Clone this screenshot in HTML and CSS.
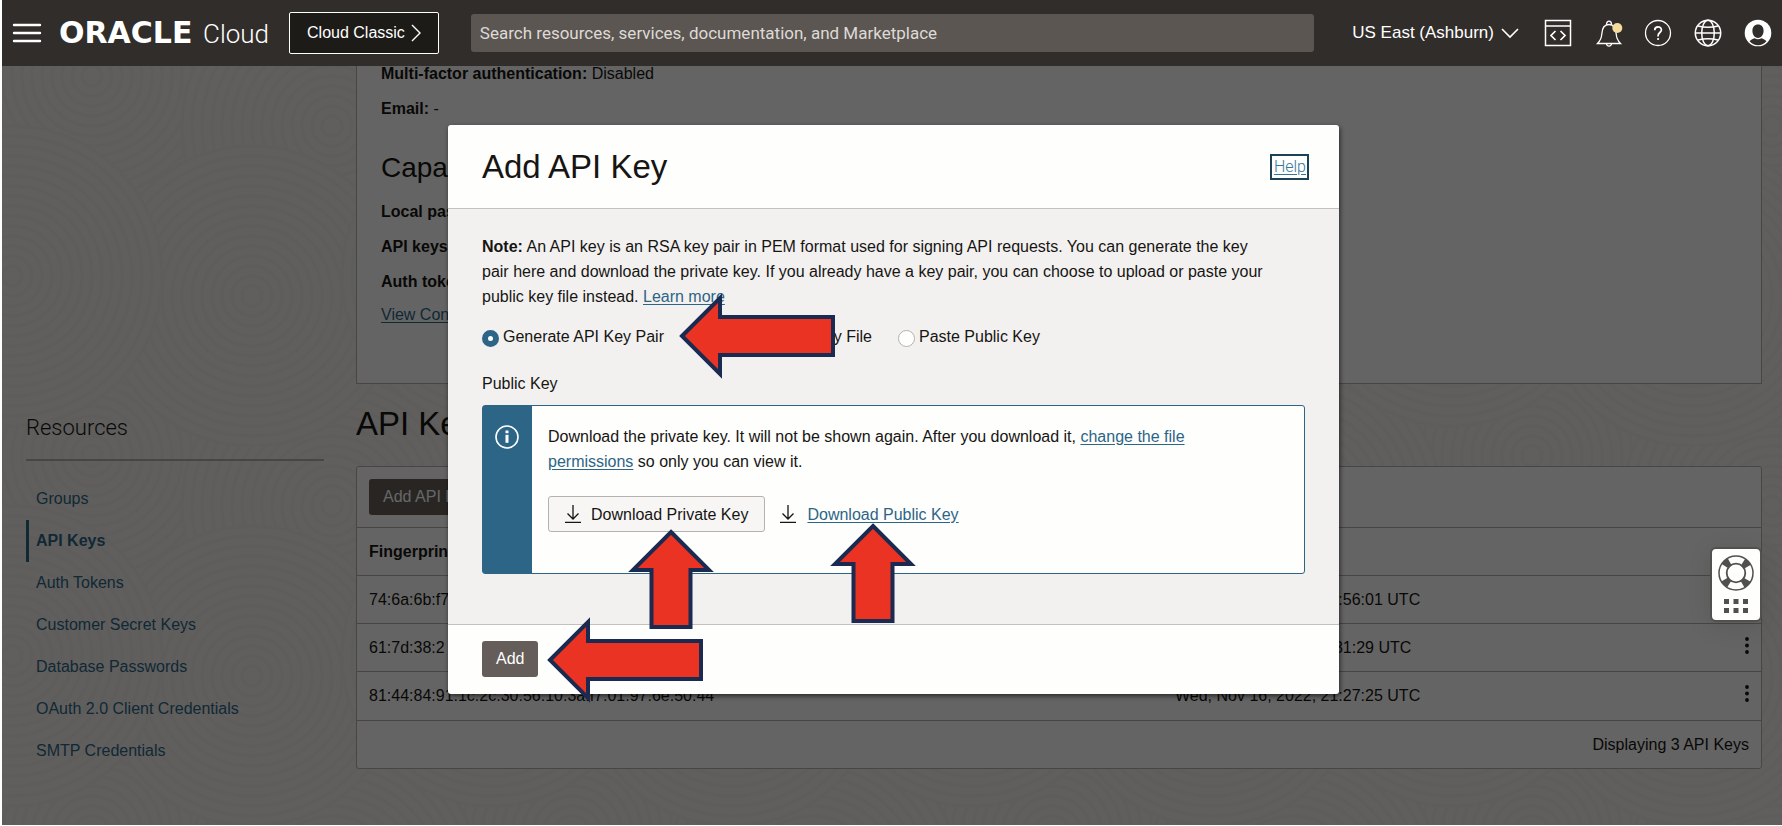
FILE: index.html
```html
<!DOCTYPE html>
<html lang="en">
<head>
<meta charset="utf-8">
<title>Add API Key - Oracle Cloud</title>
<link rel="stylesheet" href="styles.css">
</head>
<body>
<div class="app">
  <header class="topbar">
    <button class="icon-btn" type="button" aria-label="Menu">
      <svg width="28" height="20" viewBox="0 0 28 20" fill="none" stroke="#fff" stroke-width="2.4" stroke-linecap="round"><path d="M1 2h26M1 10h26M1 18h26"/></svg>
    </button>
    <a class="brand" href="#"><span class="brand-oracle">ORACLE</span><span class="brand-cloud">Cloud</span></a>
    <button class="classic" type="button">Cloud Classic
      <svg width="10" height="18" viewBox="0 0 10 18" fill="none" stroke="#fff" stroke-width="1.4"><path d="M1 1l8 8-8 8"/></svg>
    </button>
    <input class="search" type="search" aria-label="Search" placeholder="Search resources, services, documentation, and Marketplace">
    <button class="region" type="button">US East (Ashburn)
      <svg width="18" height="10" viewBox="0 0 18 10" fill="none" stroke="#fff" stroke-width="1.6"><path d="M1 1l8 8 8-8"/></svg>
    </button>
    <nav class="tools" aria-label="Tools">
      <button class="icon-btn" type="button" aria-label="Developer tools">
        <svg width="28" height="28" viewBox="0 0 28 28" fill="none" stroke="#fff" stroke-width="1.5"><path d="M1.500 1.500h25v25h-25zM1.500 7h25"/><path d="M11.500 12l-4.500 4.500 4.500 4.500M16.500 12l4.500 4.500-4.500 4.500" stroke-width="1.700"/></svg>
      </button>
      <button class="icon-btn" type="button" aria-label="Notifications">
        <svg width="28" height="28" viewBox="0 0 28 28" fill="none" stroke="#fff" stroke-width="1.300"><path d="M3.500 24.500c3-3 4-5 4.300-9.500.3-6 2.200-9.500 7.200-9.500s6.900 3.500 7.200 9.500c.3 4.500 1.300 6.500 4.300 9.500zM12.500 5.500c0-4.500 5-4.500 5 0M12.300 24.500c.5 3.400 4.900 3.400 5.400 0"/><circle cx="23.300" cy="9" r="5" fill="#f6dc9c" stroke="none"/></svg>
      </button>
      <button class="icon-btn" type="button" aria-label="Help">
        <svg width="28" height="28" viewBox="0 0 28 28" fill="none" stroke="#fff" stroke-width="1.300"><circle cx="14" cy="14" r="12.500"/><path d="M10.700 11.200c.1-4.300 6.700-4.300 6.700-.2 0 2.500-3.300 2.600-3.300 5.600v.8" stroke-width="1.700"/><circle cx="14.100" cy="20" r="1.100" fill="#fff" stroke="none"/></svg>
      </button>
      <button class="icon-btn" type="button" aria-label="Language">
        <svg width="28" height="28" viewBox="0 0 28 28" fill="none" stroke="#fff" stroke-width="1.500"><circle cx="14" cy="14" r="12.700"/><ellipse cx="14" cy="14" rx="6.300" ry="12.700"/><path d="M1.300 14h25.400M4 7c5.500 1.500 14.500 1.500 20 0M4 21c5.500-1.500 14.500-1.500 20 0"/></svg>
      </button>
      <button class="icon-btn" type="button" aria-label="Profile">
        <svg width="28" height="28" viewBox="0 0 28 28"><circle cx="14" cy="14" r="13.300" fill="#fff"/><path d="M14 5.500c3.500 0 5.600 2.500 5.600 6.300 0 3.800-2.300 7.200-5.600 7.200s-5.600-3.400-5.600-7.200c0-3.800 2.100-6.300 5.600-6.300zM10.600 19.200c2.200 1.400 4.600 1.400 6.800 0 2 .6 3.800 1.600 5 3-4.500 5.300-12.300 5.300-16.800 0 1.200-1.400 3-2.400 5-3z" fill="#312d2a"/></svg>
      </button>
    </nav>
  </header>

  <div class="page">
    <svg class="texture" width="100%" height="100%" aria-hidden="true">
      <defs>
        <g id="rings" fill="none" stroke="#ebe9e4" stroke-width="3">
          <circle r="150" fill="#efede8"/><circle r="140"/><circle r="130"/><circle r="120"/><circle r="110"/><circle r="100"/><circle r="90"/><circle r="80"/><circle r="70"/><circle r="60"/><circle r="50"/><circle r="40"/><circle r="30"/><circle r="20"/><circle r="10"/>
        </g>
        <pattern id="sand" width="480" height="380" patternUnits="userSpaceOnUse">
          <use href="#rings" x="90" y="10"/><use href="#rings" x="90" y="390"/><use href="#rings" x="570" y="10"/><use href="#rings" x="570" y="390"/>
          <use href="#rings" x="330" y="60"/><use href="#rings" x="330" y="440"/><use href="#rings" x="-150" y="60"/>
          <use href="#rings" x="250" y="230"/><use href="#rings" x="10" y="210"/><use href="#rings" x="490" y="210"/>
        </pattern>
      </defs>
      <rect width="100%" height="100%" fill="url(#sand)"/>
    </svg>

    <aside class="side">
      <h2>Resources</h2>
      <ul>
        <li><a href="#">Groups</a></li>
        <li class="active"><a href="#" aria-current="page">API Keys</a></li>
        <li><a href="#">Auth Tokens</a></li>
        <li><a href="#">Customer Secret Keys</a></li>
        <li><a href="#">Database Passwords</a></li>
        <li><a href="#">OAuth 2.0 Client Credentials</a></li>
        <li><a href="#">SMTP Credentials</a></li>
      </ul>
    </aside>

    <main class="main">
      <section class="details">
        <p><b>Multi-factor authentication:</b> Disabled</p>
        <p><b>Email:</b> -</p>
        <h2>Capabilities</h2>
        <p><b>Local password:</b> Yes</p>
        <p><b>API keys:</b> Yes</p>
        <p><b>Auth tokens:</b> Yes</p>
        <a href="#">View Configuration file</a>
      </section>

      <h1>API Keys</h1>
      <section class="keys">
        <div class="keys-bar"><button class="dark-btn" type="button">Add API Key</button></div>
        <table>
          <thead><tr><th class="c-print">Fingerprint</th><th>Created</th><th class="c-menu"></th></tr></thead>
          <tbody>
            <tr><td>74:6a:6b:f7</td><td>Wed, Nov 16, 2022, 20:56:01 UTC</td><td></td></tr>
            <tr><td>61:7d:38:2</td><td>Wed, Nov 9, 2022, 21:31:29 UTC</td><td class="c-menu"><button class="icon-btn" type="button" aria-label="Actions"><svg width="4" height="17" viewBox="0 0 4 17"><circle cx="2" cy="2" r="1.900"/><circle cx="2" cy="8.500" r="1.900"/><circle cx="2" cy="15" r="1.900"/></svg></button></td></tr>
            <tr><td>81:44:84:91:1c:2c:30:56:10:3a:f7:01:97:6e:50:44</td><td>Wed, Nov 16, 2022, 21:27:25 UTC</td><td class="c-menu"><button class="icon-btn" type="button" aria-label="Actions"><svg width="4" height="17" viewBox="0 0 4 17"><circle cx="2" cy="2" r="1.900"/><circle cx="2" cy="8.500" r="1.900"/><circle cx="2" cy="15" r="1.900"/></svg></button></td></tr>
          </tbody>
        </table>
        <div class="keys-foot">Displaying 3 API Keys</div>
      </section>
    </main>
  </div>

  <button class="support" type="button" aria-label="Support">
    <svg width="36" height="36" viewBox="0 0 36 36" fill="none" stroke="#51504c"><circle cx="18" cy="18" r="13" stroke-width="8" stroke-dasharray="6.400 14.020" stroke-dashoffset="-7.010"/><circle cx="18" cy="18" r="17" stroke-width="1.500"/><circle cx="18" cy="18" r="9.300" stroke-width="1.800"/></svg>
    <svg width="24" height="14" viewBox="0 0 24 14" fill="#51504c"><path d="M0 0h5v5H0zM9.500 0h5v5h-5zM19 0h5v5h-5zM0 9h5v5H0zM9.500 9h5v5h-5zM19 9h5v5h-5z"/></svg>
  </button>

  <div class="overlay">
    <form class="modal" role="dialog" aria-labelledby="dlg-title">
      <header class="modal-head">
        <h2 id="dlg-title">Add API Key</h2>
        <a class="help" href="#">Help</a>
      </header>
      <div class="modal-body">
        <p class="note"><b>Note:</b> An API key is an RSA key pair in PEM format used for signing API requests. You can generate the key pair here and download the private key. If you already have a key pair, you can choose to upload or paste your public key file instead. <a href="#">Learn more</a></p>
        <div class="radios">
          <label><input type="radio" name="source" checked>Generate API Key Pair</label>
          <label><input type="radio" name="source">Upload Public Key File</label>
          <label><input type="radio" name="source">Paste Public Key</label>
        </div>
        <div class="field">Public Key</div>
        <div class="info">
          <div class="info-bar">
            <svg width="24" height="24" viewBox="0 0 24 24" fill="none" stroke="#fff"><circle cx="12" cy="12" r="11" stroke-width="1.600"/><path d="M12 9.800v8" stroke-width="3"/><path d="M12 5.500v2.700" stroke-width="3"/></svg>
          </div>
          <div class="info-main">
            <p>Download the private key. It will not be shown again. After you download it, <a href="#">change the file permissions</a> so only you can view it.</p>
            <div class="downloads">
              <button class="light-btn" type="button">
                <svg width="16" height="18" viewBox="0 0 16 18" fill="none" stroke="#161513" stroke-width="1.300"><path d="M8 0v13.500M2.500 8.500L8 14l5.500-5.500M0 17.300h16"/></svg>
                Download Private Key</button>
              <svg width="16" height="18" viewBox="0 0 16 18" fill="none" stroke="#161513" stroke-width="1.300"><path d="M8 0v13.500M2.500 8.500L8 14l5.500-5.500M0 17.300h16"/></svg>
              <a href="#">Download Public Key</a>
            </div>
          </div>
        </div>
      </div>
      <footer class="modal-foot"><button class="dark-btn" type="submit">Add</button></footer>

      <svg class="arrow arrow-generate" width="156" height="86" viewBox="0 0 156 86"><path d="M3 43L41 5v19h113v38H41v19z"/></svg>
      <svg class="arrow arrow-private" width="88" height="102" viewBox="0 0 88 102"><path d="M44 4L82 42H63.500v57h-39V42H6z"/></svg>
      <svg class="arrow arrow-public" width="88" height="102" viewBox="0 0 88 102"><path d="M44 4L82 42H63.500v57h-39V42H6z"/></svg>
      <svg class="arrow arrow-add" width="156" height="86" viewBox="0 0 156 86"><path d="M3 43L41 5v19h113v38H41v19z"/></svg>
    </form>
  </div>
</div>
</body>
</html>
```

FILE: styles.css
```css
* { box-sizing: border-box; }
body {
  margin: 0;
  padding: 0 0 2px 2px;
  background: #fff;
  color: #161513;
  font: 16px/20px "Liberation Sans", Arial, sans-serif;
}
h1, h2, p, ul { margin: 0; padding: 0; font-weight: 400; }
ul { list-style: none; }
button { font: inherit; color: inherit; cursor: pointer; }
svg { display: block; flex: none; overflow: visible; }
a { color: #2c6586; text-underline-offset: 2px; }
.app { position: relative; min-height: calc(100vh - 2px); display: flex; flex-direction: column; overflow: hidden; }
.icon-btn { display: inline-flex; padding: 0; border: 0; background: none; }

/* Top bar */
.topbar {
  position: relative;
  z-index: 3;
  display: flex;
  align-items: center;
  height: 66px;
  padding: 0 10px 0 11px;
  background: #312d2a;
  color: #fff;
}
.brand { display: flex; align-items: baseline; gap: 8px; margin: 0 20px 0 18px; color: #fff; text-decoration: none; line-height: 32px; }
.brand-oracle { font-family: "DejaVu Sans", sans-serif; font-weight: 700; font-size: 30px; min-width: 136px; }
.brand-cloud { font-family: Roboto, sans-serif; font-weight: 300; font-size: 26px; }
.classic { display: flex; align-items: center; gap: 6px; height: 42px; padding: 0 17px; border: 1px solid #fff; border-radius: 2px; background: #1c1b17; white-space: nowrap; }
.search {
  flex: 1;
  height: 38px;
  margin: 0 38px 0 32px;
  padding: 0 13px 0 9px;
  border: 0;
  border-radius: 3px;
  background: #5b5652;
  color: #fff;
  font: 17px Roboto, sans-serif;
}
.search::placeholder { color: #dedad6; opacity: 1; }
.region { display: flex; align-items: center; gap: 7px; padding: 0; border: 0; background: none; font-size: 17px; white-space: nowrap; }
.tools { display: flex; gap: 22px; margin-left: 25px; }

/* Page under the dialog */
.page { position: relative; flex: 1; display: flex; background: #f1efe9; }
.texture { position: absolute; inset: 0; }
.side { position: relative; width: 298px; margin-left: 24px; padding-top: 347px; }
.side h2 { padding-bottom: 16px; border-bottom: 2px solid #b2afab; font: 300 22px/30px Roboto, sans-serif; }
.side ul { padding-top: 17px; }
.side li { height: 42px; padding-left: 8px; border-left: 2px solid transparent; line-height: 42px; }
.side a { text-decoration: none; }
.side .active { border-left: 3px solid #2c6586; padding-left: 7px; font-weight: 700; }
.main { position: relative; flex: 1; margin: 0 20px 56px 32px; }
.details { height: 318px; padding: 0 24px; border: 1px solid #b2afab; border-top: 0; background: #fcfbfa; }
.details p { padding-bottom: 19px; line-height: 16px; }
.details h2 { padding: 16px 0 20px; font-size: 28px; line-height: 32px; }
.details a { display: block; line-height: 12px; }
.main h1 { padding: 23px 0 25px; font-size: 33px; line-height: 34px; }
.keys { border: 1px solid #b2afab; border-radius: 3px; background: #fcfbfa; }
.keys-bar { padding: 12px; }
.dark-btn { height: 36px; padding: 0 14px; border: 0; border-radius: 3px; background: #645d59; color: #fff; }
.keys table { width: 100%; border-collapse: collapse; }
.keys th, .keys td { height: 48px; padding: 0 12px; border-top: 1px solid #b2afab; text-align: left; }
.keys .c-print { width: 806px; }
.keys .c-menu { width: 60px; text-align: right; }
.keys td svg { fill: #161513; }
.keys-foot { height: 48px; padding: 0 12px; border-top: 1px solid #b2afab; text-align: right; line-height: 47px; }

.support {
  position: absolute;
  z-index: 3;
  top: 547px;
  right: 20px;
  display: flex;
  flex-direction: column;
  align-items: center;
  gap: 8px;
  width: 52px;
  padding: 6px 0 7px;
  border: 2px solid #51504c;
  border-radius: 6px;
  background: #fefefd;
  box-shadow: 0 4px 24px rgba(0, 0, 0, .1);
}

/* Dialog */
.overlay { position: absolute; z-index: 2; inset: 66px 0 0; padding: 59px 0 0 3px; background: rgba(0, 0, 0, .6); }
.modal { position: relative; width: 50vw; min-width: 720px; margin: 0 auto; border-radius: 3px; background: #fefefd; box-shadow: 1px 2px 5px rgba(0, 0, 0, .6); }
.modal-head { display: flex; align-items: center; justify-content: space-between; height: 83px; padding: 0 30px 0 34px; }
.modal-head h2 { font-size: 33px; line-height: 40px; }
.help { padding: 1px 1px 1px 2px; border: 2px solid #1c4258; color: #35779a; font-family: Roboto, sans-serif; font-weight: 300; }
.modal-body { padding: 25px 34px 50px; border: solid #c4c0bd; border-width: 1px 0; background: #f3f1f0; }
.note { padding-right: 38px; line-height: 25px; }
.radios { display: flex; gap: 26px; padding-top: 18px; }
.radios label { display: flex; align-items: center; gap: 4px; }
.radios input { appearance: none; width: 17px; height: 17px; margin: 2px 0 0; border: 1px solid #b5b1ae; border-radius: 50%; background: #fefefd; }
.radios input:checked { border: 6px solid #2c6586; }
.field { padding: 27px 0 11px; }
.info { display: flex; border: 1px solid #2c6586; border-radius: 3px; background: #fefefd; }
.info-bar { width: 49px; padding: 19px 0 0 12px; background: #2c6586; }
.info-main { flex: 1; padding: 18px 60px 41px 16px; line-height: 25px; }
.downloads { display: flex; align-items: center; gap: 11px; padding-top: 22px; }
.downloads > svg { margin-left: 4px; }
.light-btn { display: flex; align-items: center; gap: 10px; height: 36px; padding: 0 16px; border: 1px solid #b5b1ae; border-radius: 3px; background: #f8f6f5; }
.modal-foot { padding: 16px 34px 17px; }

/* Call-out arrows over the dialog */
.arrow { position: absolute; fill: #eb3323; stroke: #1b2a50; stroke-width: 4; stroke-miterlimit: 10; pointer-events: none; }
.arrow-generate { left: 231px; top: 168px; }
.arrow-private { left: 179px; top: 403px; }
.arrow-public { left: 381px; top: 397px; }
.arrow-add { left: 99px; top: 492px; }
```
